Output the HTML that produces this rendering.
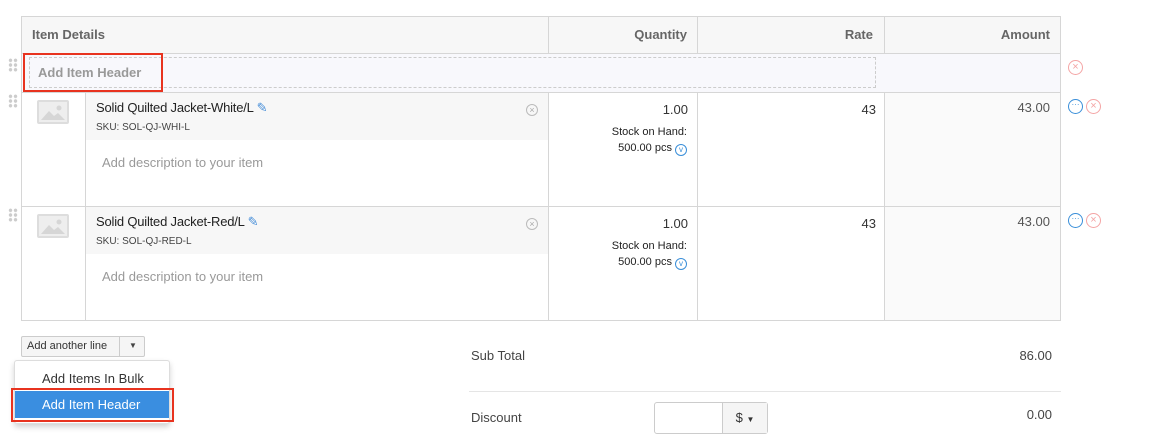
<!DOCTYPE html>
<html><head><style>
*{margin:0;padding:0;box-sizing:border-box}
body{width:1152px;height:441px;background:#fff;font-family:"Liberation Sans",sans-serif;position:relative;overflow:hidden;color:#333}
.a{position:absolute}
.hl{position:absolute;background:#d6d6d6;height:1px}
.vl{position:absolute;background:#d6d6d6;width:1px}
.h{font-size:13px;color:#666;font-weight:bold;top:27px}
.dots{position:absolute;width:10px;height:14px;background:radial-gradient(circle,#ccc 1.6px,transparent 1.9px) 0 0/5px 4.7px}
.img{position:absolute;width:32px;height:24px;border:2px solid #ddd;border-radius:2px;background:#eee;overflow:hidden}
.x{position:absolute;width:15px;height:15px;border:1px solid #f4a5a5;border-radius:50%;color:#f4a5a5;font-size:11px;line-height:13px;text-align:center}
.m{position:absolute;width:15px;height:15px;border:1px solid #3a8fd9;border-radius:50%;color:#3a8fd9;font-size:8px;line-height:9px;text-align:center}
</style></head><body>
<div class="a" style="left:22px;top:16px;width:1038px;height:37px;background:#f7f7f7"></div>
<div class="a" style="left:22px;top:53px;width:1038px;height:39px;background:#f8f8fc"></div>
<div class="a" style="left:86px;top:93px;width:462px;height:47px;background:#f7f7f7"></div>
<div class="a" style="left:86px;top:207px;width:462px;height:47px;background:#f7f7f7"></div>
<div class="a" style="left:885px;top:93px;width:175px;height:227px;background:#fafafa"></div>
<div class="hl" style="left:22px;top:16px;width:1039px"></div>
<div class="hl" style="left:22px;top:53px;width:1039px"></div>
<div class="hl" style="left:22px;top:92px;width:1039px"></div>
<div class="hl" style="left:22px;top:206px;width:1039px"></div>
<div class="hl" style="left:22px;top:320px;width:1039px"></div>
<div class="vl" style="left:21px;top:16px;height:305px"></div>
<div class="vl" style="left:1060px;top:16px;height:305px"></div>
<div class="vl" style="left:548px;top:16px;height:37px"></div>
<div class="vl" style="left:697px;top:16px;height:37px"></div>
<div class="vl" style="left:884px;top:16px;height:37px"></div>
<div class="vl" style="left:548px;top:92px;height:228px"></div>
<div class="vl" style="left:697px;top:92px;height:228px"></div>
<div class="vl" style="left:884px;top:92px;height:228px"></div>
<div class="vl" style="left:85px;top:92px;height:228px"></div>
<div class="a h" style="left:32px">Item Details</div>
<div class="a h" style="right:465px">Quantity</div>
<div class="a h" style="right:279px">Rate</div>
<div class="a h" style="right:102px">Amount</div>
<div class="a" style="left:29px;top:57px;width:847px;height:31px;border:1px dashed #ccc"></div>
<div class="a" style="left:23px;top:53px;width:140px;height:39px;border:2px solid #e8331f"></div>
<div class="a" style="left:38px;top:65px;font-size:13px;color:#999;font-weight:bold">Add Item Header</div>
<div class="dots" style="left:8px;top:58px"></div>
<div class="x" style="left:1068px;top:60px">×</div>
<div class="dots" style="left:8px;top:94px"></div>
<div class="dots" style="left:8px;top:208px"></div>
<div class="img" style="left:37px;top:100px"><svg width="28" height="20"><path d="M2 18 L10 9 L15 14 L19 11 L26 18Z" fill="#d6d6d6"/><circle cx="20" cy="6" r="2.5" fill="#d6d6d6"/></svg></div>
<div class="img" style="left:37px;top:214px"><svg width="28" height="20"><path d="M2 18 L10 9 L15 14 L19 11 L26 18Z" fill="#d6d6d6"/><circle cx="20" cy="6" r="2.5" fill="#d6d6d6"/></svg></div>
<div class="a" style="left:96px;top:100px;font-size:13px;color:#222;letter-spacing:-0.2px">Solid Quilted Jacket-White/L <span style="color:#4a90d9">✎</span></div>
<div class="a" style="left:96px;top:122px;font-size:10px;color:#444">SKU: SOL-QJ-WHI-L</div>
<div class="a" style="left:96px;top:214px;font-size:13px;color:#222;letter-spacing:-0.2px">Solid Quilted Jacket-Red/L <span style="color:#4a90d9">✎</span></div>
<div class="a" style="left:96px;top:236px;font-size:10px;color:#444">SKU: SOL-QJ-RED-L</div>
<div class="x" style="left:526px;top:104px;border-color:#bbb;color:#aaa;width:12px;height:12px;font-size:9px;line-height:10px">×</div>
<div class="x" style="left:526px;top:218px;border-color:#bbb;color:#aaa;width:12px;height:12px;font-size:9px;line-height:10px">×</div>
<div class="a" style="left:102px;top:155px;font-size:13px;color:#999">Add description to your item</div>
<div class="a" style="left:102px;top:269px;font-size:13px;color:#999">Add description to your item</div>
<div class="a" style="right:464px;top:102px;font-size:13px">1.00</div>
<div class="a" style="right:465px;top:126px;font-size:11px;color:#222">Stock on Hand:</div>
<div class="a" style="right:465px;top:142px;font-size:11px;color:#222">500.00 pcs <span style="display:inline-block;width:12px;height:12px;border:1px solid #3a8fd9;border-radius:50%;color:#3a8fd9;font-size:8px;line-height:10px;text-align:center;vertical-align:-1px">v</span></div>
<div class="a" style="right:464px;top:216px;font-size:13px">1.00</div>
<div class="a" style="right:465px;top:240px;font-size:11px;color:#222">Stock on Hand:</div>
<div class="a" style="right:465px;top:256px;font-size:11px;color:#222">500.00 pcs <span style="display:inline-block;width:12px;height:12px;border:1px solid #3a8fd9;border-radius:50%;color:#3a8fd9;font-size:8px;line-height:10px;text-align:center;vertical-align:-1px">v</span></div>
<div class="a" style="right:276px;top:102px;font-size:13px">43</div>
<div class="a" style="right:276px;top:216px;font-size:13px">43</div>
<div class="a" style="right:102px;top:100px;font-size:13px;color:#555">43.00</div>
<div class="a" style="right:102px;top:214px;font-size:13px;color:#555">43.00</div>
<div class="m" style="left:1068px;top:99px">···</div>
<div class="x" style="left:1086px;top:99px">×</div>
<div class="m" style="left:1068px;top:213px">···</div>
<div class="x" style="left:1086px;top:213px">×</div>
<div class="a" style="left:21px;top:336px;width:124px;height:21px;border:1px solid #ccc;border-radius:2px;background:#f5f5f5;font-size:11px;line-height:19px;padding-left:5px;color:#333">Add another line</div>
<div class="a" style="left:119px;top:337px;width:1px;height:19px;background:#ccc"></div>
<div class="a" style="left:129px;top:341px;font-size:8px;color:#444">▼</div>
<div class="a" style="left:14px;top:360px;width:156px;height:64px;border:1px solid #ddd;border-radius:3px;background:#fff;box-shadow:0 3px 6px rgba(0,0,0,.18)"></div>
<div class="a" style="left:42px;top:371px;font-size:13px;color:#333">Add Items In Bulk</div>
<div class="a" style="left:15px;top:391px;width:154px;height:27px;background:#3a8ee0"></div>
<div class="a" style="left:11px;top:388px;width:163px;height:34px;border:2px solid #e8331f"></div>
<div class="a" style="left:42px;top:397px;font-size:13px;color:#fff">Add Item Header</div>
<div class="a" style="left:471px;top:348px;font-size:13px;color:#444">Sub Total</div>
<div class="a" style="right:100px;top:348px;font-size:13px;color:#444">86.00</div>
<div class="hl" style="left:469px;top:391px;width:592px;background:#e5e5e5"></div>
<div class="a" style="left:471px;top:410px;font-size:13px;color:#444">Discount</div>
<div class="a" style="left:654px;top:402px;width:114px;height:32px;border:1px solid #ccc;border-radius:3px"></div>
<div class="a" style="left:722px;top:403px;width:45px;height:30px;background:#f5f5f5;border-left:1px solid #ccc;font-size:13px;line-height:30px;text-align:center;color:#333">$ <span style="font-size:8px">▼</span></div>
<div class="a" style="right:100px;top:407px;font-size:13px;color:#444">0.00</div>
</body></html>
